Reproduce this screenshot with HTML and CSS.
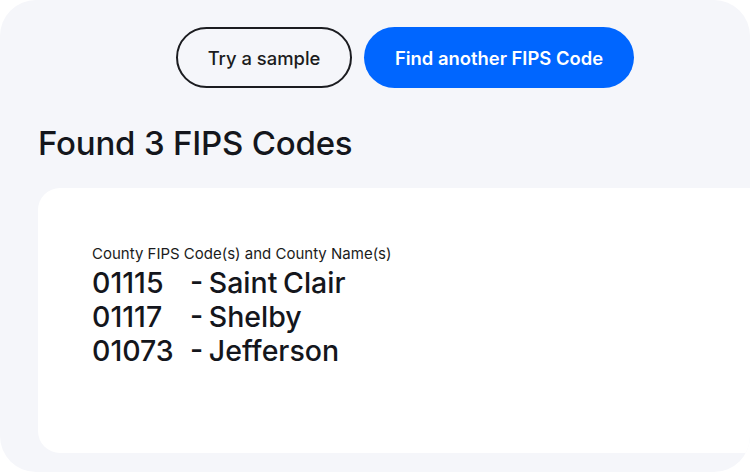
FILE: index.html
```html
<!DOCTYPE html>
<html>
<head>
<meta charset="utf-8">
<link rel="stylesheet" href="styles.css">
</head>
<body>
<div class="panel">
  <div class="actions">
    <button class="btn btn-outline">Try a sample</button>
    <button class="btn btn-primary">Find another FIPS Code</button>
  </div>
  <h1 class="title">Found 3 FIPS Codes</h1>
  <div class="result">
    <div class="label">County FIPS Code(s) and County Name(s)</div>
    <div class="rows">
      <span class="code">01115</span><span class="name">- Saint Clair</span>
      <span class="code">01117</span><span class="name">- Shelby</span>
      <span class="code">01073</span><span class="name">- Jefferson</span>
    </div>
  </div>
</div>
</body>
</html>
```
FILE: styles.css
```css
* { box-sizing: border-box; }
html, body { margin: 0; padding: 0; background: #ffffff; }
body { font-family: Inter, "Liberation Sans", sans-serif; color: #14161c; }
.panel {
  width: 750px;
  height: 472px;
  background: #f5f6fa;
  border-radius: 36px;
  overflow: hidden;
  padding-top: 27px;
  padding-left: 38px;
}
.actions {
  display: flex;
  gap: 12px;
  padding-left: 138px;
}
.btn {
  height: 61px;
  border-radius: 31px;
  font-family: Inter, "Liberation Sans", sans-serif;
  font-size: 18.4px;
  font-weight: 500;
  cursor: pointer;
}
.btn-outline {
  width: 176px;
  background: transparent;
  border: 2px solid #1b1c20;
  color: #1b1c20;
}
.btn-primary {
  width: 270px;
  background: #0066ff;
  border: none;
  color: #ffffff;
  font-weight: 600;
}
.title {
  margin: 35px 0 0 0;
  font-size: 33px;
  font-weight: 500;
  line-height: 40px;
  letter-spacing: -0.2px;
}
.result {
  margin-top: 25px;
  width: 760px;
  height: 265px;
  background: #ffffff;
  border-radius: 22px;
  padding: 57px 0 0 54px;
}
.label {
  font-size: 15px;
  line-height: 18px;
  color: #1b1c20;
}
.rows {
  display: grid;
  grid-template-columns: 98px auto;
  font-size: 28.5px;
  line-height: 34px;
  font-weight: 500;
  margin-top: 3px;
}
.name {
  word-spacing: -2px;
}
```
